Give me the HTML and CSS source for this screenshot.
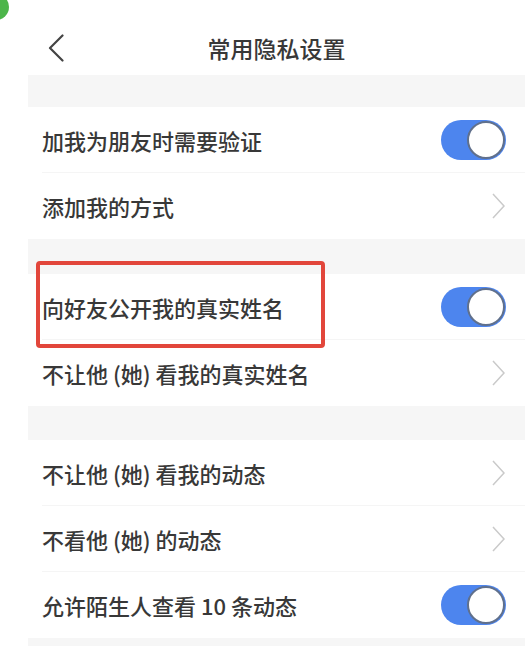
FILE: index.html
```html
<!DOCTYPE html>
<html lang="zh-CN">
<head>
  <meta charset="UTF-8" />
  <meta name="viewport" content="width=device-width, initial-scale=1.0" />
  <title>常用隐私设置</title>
  <link rel="stylesheet" href="styles.css">
</head>
<body>
  <div class="dot"></div>

  <div class="page">
    <div class="header">
      <span class="back">
        <svg width="16" height="28" viewBox="0 0 16 28"><polyline points="14.5,1.5 2,14 14.5,26.5" fill="none" stroke="#444" stroke-width="2.2" stroke-linecap="round" stroke-linejoin="round"/></svg>
      </span>
      <h1>常用隐私设置</h1>
      <span></span>
    </div>

    <div class="gap gap-1"></div>
    <div class="group">
      <div class="row">
        <span>加我为朋友时需要验证</span>
        <span class="toggle"><span class="knob"></span></span>
      </div>
      <div class="row">
        <span>添加我的方式</span>
        <svg class="arrow" width="13" height="26" viewBox="0 0 13 26"><polyline points="1,1 12,13 1,25" fill="none" stroke="#cacaca" stroke-width="1.5"/></svg>
      </div>
    </div>

    <div class="gap gap-2"></div>
    <div class="group">
      <div class="row">
        <span>向好友公开我的真实姓名</span>
        <span class="toggle"><span class="knob"></span></span>
      </div>
      <div class="row">
        <span>不让他 (她) 看我的真实姓名</span>
        <svg class="arrow" width="13" height="26" viewBox="0 0 13 26"><polyline points="1,1 12,13 1,25" fill="none" stroke="#cacaca" stroke-width="1.5"/></svg>
      </div>
    </div>

    <div class="gap gap-3"></div>
    <div class="group">
      <div class="row">
        <span>不让他 (她) 看我的动态</span>
        <svg class="arrow" width="13" height="26" viewBox="0 0 13 26"><polyline points="1,1 12,13 1,25" fill="none" stroke="#cacaca" stroke-width="1.5"/></svg>
      </div>
      <div class="row">
        <span>不看他 (她) 的动态</span>
        <svg class="arrow" width="13" height="26" viewBox="0 0 13 26"><polyline points="1,1 12,13 1,25" fill="none" stroke="#cacaca" stroke-width="1.5"/></svg>
      </div>
      <div class="row">
        <span>允许陌生人查看 10 条动态</span>
        <span class="toggle"><span class="knob"></span></span>
      </div>
    </div>
    <div class="gap gap-1"></div>
  </div>

  <div class="mark"></div>
</body>
</html>
```

FILE: styles.css
```css
body {
  margin: 0;
  background: #fff;
  font-family: "Noto Sans CJK SC", "Noto Sans", sans-serif;
  color: #383838;
  overflow: hidden;
}

.page {
  margin-left: 28px;
}

.header {
  box-sizing: border-box;
  height: 75px;
  padding-top: 20px;
  display: grid;
  grid-template-columns: 1fr auto 1fr;
  align-items: center;
}

.back {
  padding-left: 20px;
  display: flex;
}

.header h1 {
  margin: 0;
  font-size: 23px;
  font-weight: 500;
  color: #383838;
}

.gap {
  background: #f6f6f6;
}

.gap-1 { height: 32px; }
.gap-2 { height: 35px; }
.gap-3 { height: 34px; }

.row {
  height: 66px;
  margin-left: 14px;
  padding-right: 19px;
  display: flex;
  align-items: center;
  justify-content: space-between;
  font-size: 22px;
  font-weight: 500;
  border-bottom: 1px solid #f5f5f5;
  box-sizing: border-box;
}

.row:last-child {
  border-bottom: none;
}

.arrow {
  margin-right: 1px;
}

.toggle {
  box-sizing: border-box;
  width: 65px;
  height: 40px;
  border-radius: 20px;
  background: #4d85ee;
  padding: 1px;
  display: flex;
  justify-content: flex-end;
}

.knob {
  box-sizing: border-box;
  width: 38px;
  height: 38px;
  border-radius: 50%;
  background: #fff;
  border: 2px solid #60708c;
}

.dot {
  position: absolute;
  left: -17px;
  top: -6px;
  width: 26px;
  height: 26px;
  border-radius: 50%;
  background: #4cb54a;
}

.mark {
  position: absolute;
  left: 36px;
  top: 261px;
  width: 289px;
  height: 87px;
  box-sizing: border-box;
  border: 4px solid #e2463b;
  border-radius: 4px;
}
```
